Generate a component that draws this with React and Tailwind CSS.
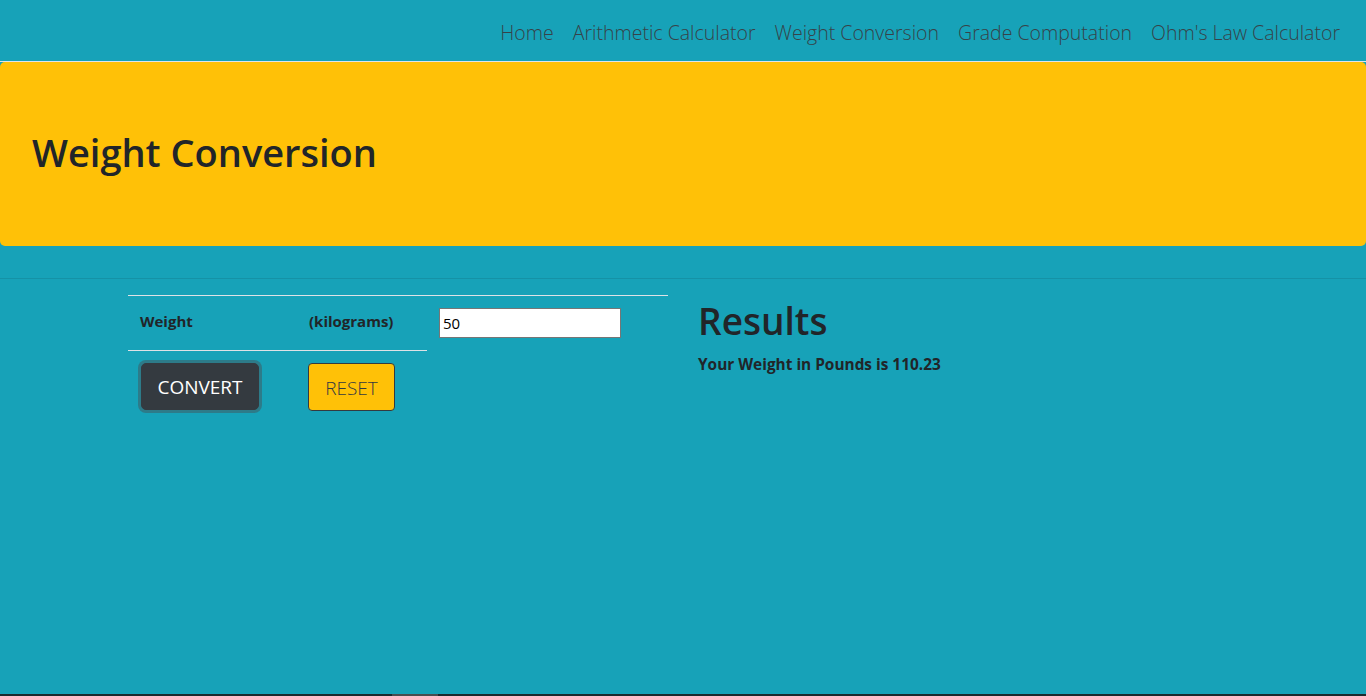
import { useState } from 'react';

const links = ['Home', 'Arithmetic Calculator', 'Weight Conversion', 'Grade Computation', "Ohm's Law Calculator"];

const App = () => {
    const [kg, setKg] = useState('50');
    const [pounds, setPounds] = useState('110.23');

    const handleConvert = () => {
        const n = parseFloat(kg);
        setPounds(isNaN(n) ? '' : (n * 2.20462).toFixed(2));
    };

    const handleReset = () => {
        setKg('');
        setPounds('');
    };

    return (
        <div className="h-[696px] flex flex-col bg-[#17a2b8] text-[#212529] font-['Open_Sans','Noto_Sans',sans-serif] overflow-hidden">
            <nav className="h-[62px] shrink-0 flex justify-end items-center gap-[19px] pt-[4px] pr-[26px] border-b border-[#dfe5ea]">
                {links.map((l) => (
                    <a key={l} href="#" className="text-[19.5px] font-light text-[#364249] leading-none">{l}</a>
                ))}
            </nav>

            <div className="h-[184px] shrink-0 bg-[#ffc107] rounded-[5px] flex items-center px-[32px]">
                <h1 className="text-[38px] font-semibold leading-[1.2] -mt-[2px]">Weight Conversion</h1>
            </div>

            <div className="mt-[32px] border-t border-[#1592a6]" />

            <div className="w-[1110px] mx-auto pt-[16px] grid grid-cols-2 gap-[30px]">
                <div>
                    <div className="grid grid-cols-[169px_130px_241px] border-t border-[#dee2e6] text-[15px] font-bold">
                        <div className="h-[55px] flex items-center pl-[12px] pb-[3px] border-b border-[#dee2e6]">Weight</div>
                        <div className="h-[55px] flex items-center pl-[12px] pb-[3px] border-b border-[#dee2e6]">(kilograms)</div>
                        <div className="h-[55px] flex items-start pt-[12px] pl-[12px]">
                            <input
                                type="text"
                                value={kg}
                                onChange={(e) => setKg(e.target.value)}
                                className="w-[182px] h-[30px] bg-white border border-[#767676] px-[3px] text-[15px] font-normal text-black outline-none"
                            />
                        </div>
                        <div className="pt-[12px] pl-[13px]">
                            <button
                                onClick={handleConvert}
                                className="h-[47px] w-[118px] pt-[2px] bg-[#343a40] border border-[#343a40] rounded-[5px] text-white text-[19px] font-normal shadow-[0_0_0_3px_#2d7b89]"
                            >
                                CONVERT
                            </button>
                        </div>
                        <div className="pt-[12px] pl-[11px]">
                            <button
                                onClick={handleReset}
                                className="h-[48px] w-[87px] pt-[2px] bg-[#ffc107] border border-[#343a40] rounded-[4px] text-[#343a40] text-[19px] font-light"
                            >
                                RESET
                            </button>
                        </div>
                        <div />
                    </div>
                </div>

                <div className="pt-[4px]">
                    <h1 className="text-[37px] font-semibold leading-[1.2] text-[#212529] mb-[10px]">Results</h1>
                    <p className="text-[15.4px] font-bold text-[#212529]">Your Weight in Pounds is {pounds}</p>
                </div>
            </div>

            <div className="flex-1" />
            <div className="h-[2px] shrink-0 bg-[#1c2a2d] flex">
                <div className="ml-[392px] w-[46px] bg-[#4a4d4f]" />
            </div>
        </div>
    );
};

export default App;
